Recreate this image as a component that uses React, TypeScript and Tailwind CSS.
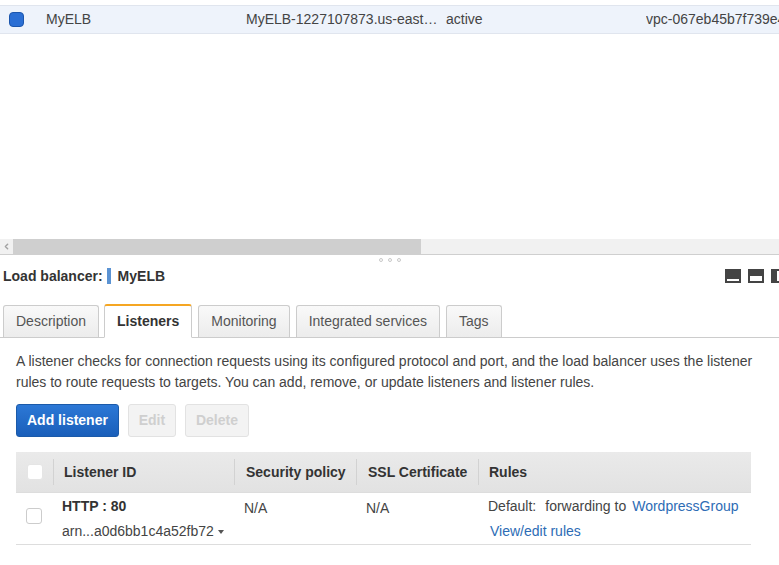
import { ChevronLeft } from 'lucide-react';

const TABS = ['Description', 'Listeners', 'Monitoring', 'Integrated services', 'Tags'];

function PanelIcon({ variant }: { variant: 'bottom' | 'mid' | 'side' }) {
  return (
    <svg width="16" height="14" viewBox="0 0 16 14" className="shrink-0">
      <rect x="0" y="0" width="16" height="14" fill="#444" />
      {variant === 'bottom' && <rect x="2" y="10" width="12" height="2" fill="#fff" />}
      {variant === 'mid' && <rect x="2" y="7" width="12" height="5" fill="#fff" />}
      {variant === 'side' && <rect x="6" y="2" width="8" height="10" fill="#fff" />}
    </svg>
  );
}

export default function App() {
  return (
    <div
      className="w-[779px] h-[565px] overflow-hidden bg-white text-[14px] text-[#444]"
      style={{ fontFamily: '"Liberation Sans", Arial, sans-serif' }}
    >
      {/* top list */}
      <div className="h-[239px] pt-[5px]">
        <div className="flex items-center h-[29px] bg-[#eef3fb] border-y border-[#e0e5ee] whitespace-nowrap">
          <div className="w-[46px] pl-[9px] flex items-center">
            <span className="w-[15px] h-[15px] rounded-[4px] bg-[#2b6fd4] border border-[#1c56ad]" />
          </div>
          <div className="w-[200px]">MyELB</div>
          <div className="w-[200px]">MyELB-1227107873.us-east…</div>
          <div className="w-[200px]">active</div>
          <div className="flex-1 min-w-0 overflow-hidden">vpc-067eb45b7f739e42</div>
        </div>
      </div>

      {/* horizontal scrollbar */}
      <div className="flex h-[15px] bg-[#f1f1f1]">
        <div className="w-[13px] flex items-center justify-center text-[#a3a3a3]">
          <ChevronLeft size={9} strokeWidth={4} />
        </div>
        <div className="w-[408px] h-full bg-[#cfcfcf]" />
      </div>
      <div className="h-[1px] bg-[#cfcfcf]" />

      {/* splitter grip */}
      <div className="h-[7px] flex justify-center gap-[5px] pt-[3px] pl-[1px]">
        <span className="w-[4px] h-[4px] rounded-full border border-[#c8c8c8]" />
        <span className="w-[4px] h-[4px] rounded-full border border-[#c8c8c8]" />
        <span className="w-[4px] h-[4px] rounded-full border border-[#c8c8c8]" />
      </div>

      {/* title bar */}
      <div className="flex items-center h-[28px] pl-[3px] pr-0">
        <span className="font-bold text-[#333]">Load balancer:</span>
        <span className="ml-[4px] w-[4px] h-[16px] bg-[#5b93d3]" />
        <span className="ml-[7px] font-bold text-[#333]">MyELB</span>
        <div className="ml-auto flex gap-[7px] -mr-[8px]">
          <PanelIcon variant="bottom" />
          <PanelIcon variant="mid" />
          <PanelIcon variant="side" />
        </div>
      </div>

      {/* tabs */}
      <div className="flex items-end gap-[6px] pl-[3px] mt-[15px] h-[33px] border-b border-[#ccc]">
        {TABS.map((t) =>
          t === 'Listeners' ? (
            <div
              key={t}
              className="h-[34px] -mb-px -ml-px px-[12px] flex items-center bg-white border border-[#ccc] border-t-2 border-t-[#f5a623] border-b-white rounded-t-[3px] font-bold text-[#333]"
            >
              {t}
            </div>
          ) : (
            <div
              key={t}
              className="h-[32px] px-[12px] flex items-center bg-gradient-to-b from-[#f9f9f9] to-[#ececec] border border-b-0 border-[#ccc] rounded-t-[3px] text-[#555]"
            >
              {t}
            </div>
          )
        )}
      </div>

      {/* content */}
      <div className="px-[16px] pt-[13px]">
        <p className="leading-[21px] w-[745px]">
          A listener checks for connection requests using its configured protocol and port, and the load balancer uses the listener rules to route requests to targets. You can add, remove, or update listeners and listener rules.
        </p>

        <div className="flex gap-[9px] mt-[11px]">
          <button className="h-[33px] px-[10px] rounded-[3px] border border-[#1b5aa9] bg-gradient-to-b from-[#2c78d6] to-[#1a5fba] text-white font-bold">
            Add listener
          </button>
          <button className="h-[33px] w-[48px] rounded-[3px] border border-[#e2e2e2] bg-[#f3f3f3] text-[#cfcfcf] font-bold">
            Edit
          </button>
          <button className="h-[33px] w-[64px] rounded-[3px] border border-[#e2e2e2] bg-[#f3f3f3] text-[#cfcfcf] font-bold">
            Delete
          </button>
        </div>

        {/* listeners table */}
        <div className="mt-[15px] w-[735px]">
          <div className="grid grid-cols-[37px_181px_122px_122px_1fr] h-[41px] items-center bg-gradient-to-b from-[#eaeaea] to-[#e2e2e2] border-b border-[#ddd] font-bold text-[#333]">
            <div className="pl-[11px] flex">
              <span className="w-[16px] h-[16px] rounded-[3px] bg-white border border-[#e5e5e5]" />
            </div>
            <div className="pl-[10px] h-[26px] flex items-center border-l border-[#d2d2d2]">Listener ID</div>
            <div className="pl-[11px] h-[26px] flex items-center border-l border-[#d2d2d2]">Security policy</div>
            <div className="pl-[11px] h-[26px] flex items-center border-l border-[#d2d2d2]">SSL Certificate</div>
            <div className="pl-[10px] h-[26px] flex items-center border-l border-[#d2d2d2]">Rules</div>
          </div>
          <div className="grid grid-cols-[37px_181px_122px_122px_1fr] h-[52px] border-b border-[#ddd] text-[#444]">
            <div className="pl-[10px] pt-[15px]">
              <span className="block w-[16px] h-[16px] rounded-[3px] bg-white border border-[#ccc]" />
            </div>
            <div className="pl-[9px] pt-[1px] leading-[25px]">
              <div className="font-bold text-[#333]">HTTP : 80</div>
              <div className="flex items-center">
                arn...a0d6bb1c4a52fb72
                <span className="ml-[4px] w-0 h-0 border-x-[3px] border-x-transparent border-t-[4px] border-t-[#555]" />
              </div>
            </div>
            <div className="pl-[10px] pt-[3px] leading-[25px]">N/A</div>
            <div className="pl-[10px] pt-[3px] leading-[25px]">N/A</div>
            <div className="pl-[10px] pt-[1px] leading-[25px] whitespace-nowrap">
              <div className="flex">
                <span>Default:</span>
                <span className="ml-[9px]">forwarding to</span>
                <span className="ml-[6px] text-[#2d6cb5]">WordpressGroup</span>
              </div>
              <div className="pl-[2px] text-[#2d6cb5]">View/edit rules</div>
            </div>
          </div>
        </div>
      </div>
    </div>
  );
}
